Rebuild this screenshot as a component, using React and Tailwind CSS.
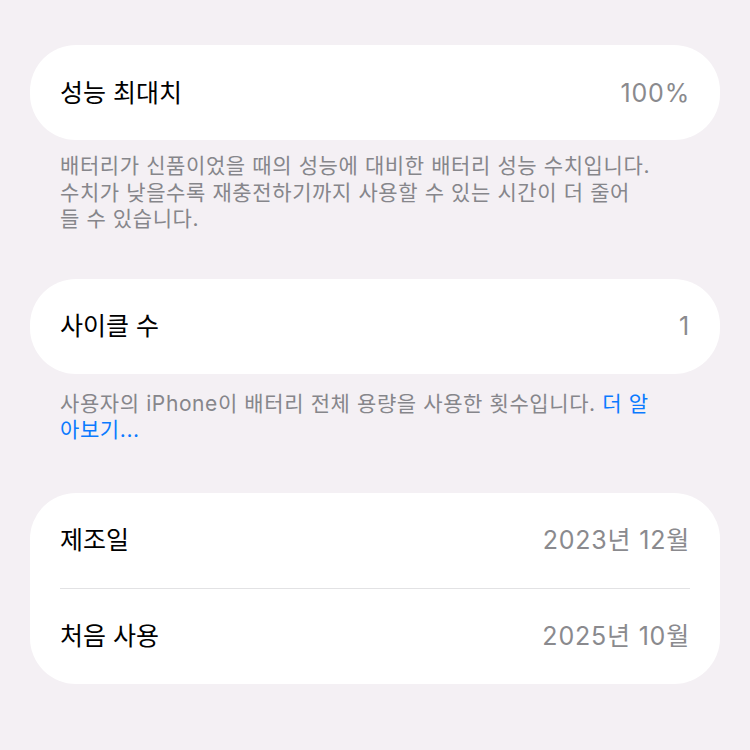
import React from "react";

const font = {
  fontFamily: 'Inter, "Noto Sans CJK KR", "Noto Sans", sans-serif',
};

function Row({ label, value }) {
  return (
    <div className="flex h-[95px] items-center justify-between pt-[2px]">
      <span className="text-[25px] text-black">{label}</span>
      <span className="text-[25px] tracking-[0.8px] text-[#8a8a8e]">{value}</span>
    </div>
  );
}

export default function App() {
  return (
    <div
      className="min-h-[750px] w-[750px] bg-[#f4f0f4] px-[30px] pt-[45px] antialiased"
      style={font}
    >
      {/* Peak performance capacity */}
      <div className="rounded-[46px] bg-white px-[30px]">
        <Row label="성능 최대치" value="100%" />
      </div>
      <p className="px-[30px] pt-[13px] text-[21px] leading-[26.5px] tracking-[0.6px] text-[#86868b]">
        배터리가 신품이었을 때의 성능에 대비한 배터리 성능 수치입니다.
        <br />
        수치가 낮을수록 재충전하기까지 사용할 수 있는 시간이 더 줄어
        <br />
        들 수 있습니다.
      </p>

      {/* Cycle count */}
      <div className="mt-[46px] rounded-[46px] bg-white px-[30px]">
        <Row label="사이클 수" value="1" />
      </div>
      <p className="px-[30px] pt-[17px] text-[21px] leading-[26.5px] tracking-[0.6px] text-[#86868b]">
        사용자의 iPhone이 배터리 전체 용량을 사용한 횟수입니다.{" "}
        <span className="text-[#0a7aff]">
          더 알
          <br />
          아보기...
        </span>
      </p>

      {/* Dates */}
      <div className="mt-[49px] rounded-[46px] bg-white px-[30px]">
        <Row label="제조일" value="2023년 12월" />
        <div className="h-px bg-[#e2e2e4]" />
        <Row label="처음 사용" value="2025년 10월" />
      </div>
    </div>
  );
}
